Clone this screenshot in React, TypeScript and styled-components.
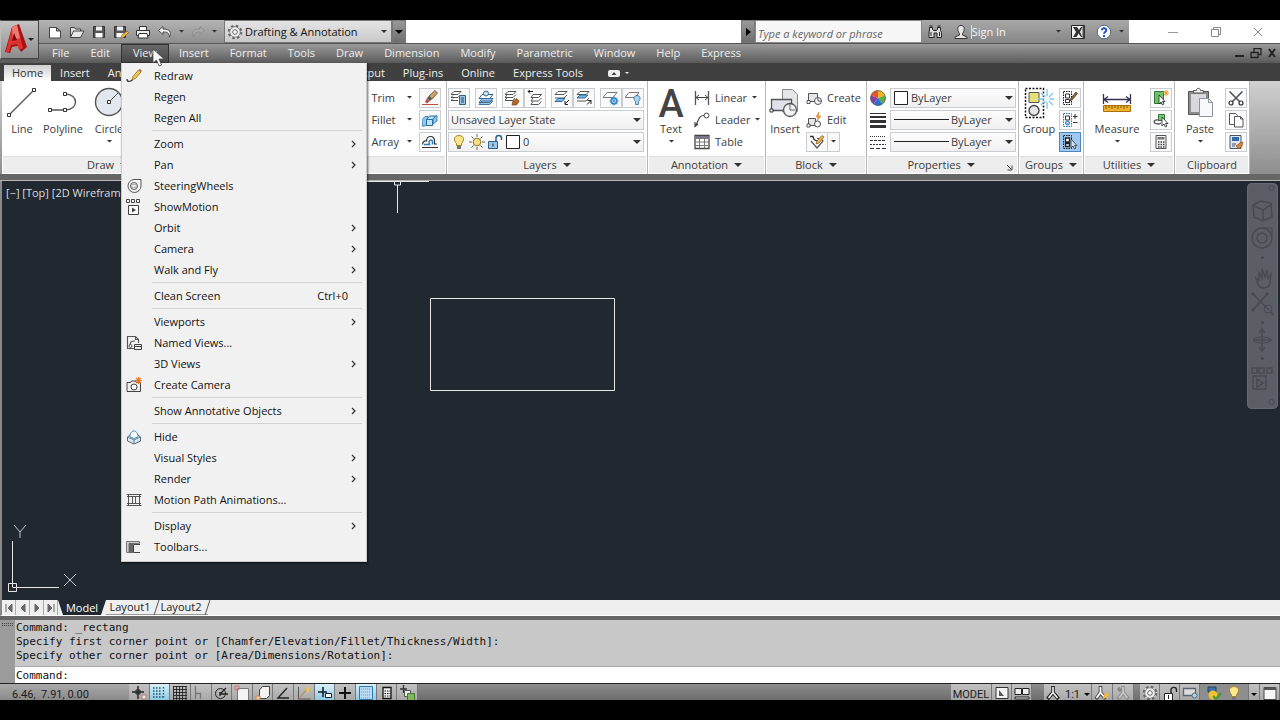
import React from 'react';
import styled, { createGlobalStyle, css } from 'styled-components';

const GlobalStyle = createGlobalStyle`
  * { box-sizing: border-box; }
  body { margin: 0; background: #000; }
  button, input, select { font: inherit; color: inherit; margin: 0; padding: 0; border: 0; background: none; border-radius: 0; }
  button { cursor: default; }
  svg { display: block; flex: none; }
`;

/* ---------- icons ---------- */

const art: Record<string, React.ReactNode> = {
  newFile: <path d="M2.5 3.5h7l4 3.5v7h-11z M9.5 3.5v3.5h4" fill="#fff" stroke="#444" />,
  open: <><path d="M1.500 13V3.500h4l1 1.500h5v2" fill="#ddd" stroke="#444" /><path d="M1.500 13.500l3-6.500h10.500l-3.500 6.500z" fill="#e8e8e8" stroke="#444" /></>,
  save: <><path d="M2.500 2.500h11v11h-11z" fill="#555" stroke="#333" /><path d="M5 2.500h6v4H5z" fill="#eee" /><path d="M4.500 9h7v4.500h-7z" fill="#fff" /></>,
  saveAs: <><path d="M1.500 2.500h11v11h-11z" fill="#555" stroke="#333" /><path d="M4 2.500h6v4H4z" fill="#eee" /><path d="M3.500 9h7v4.500h-7z" fill="#fff" /><path d="M8 14l1-3 5-4 1.500 1.500-5 5z" fill="#f2b843" stroke="#8a5a14" strokeWidth=".7" /></>,
  print: <><path d="M4.500 6V2.500h7V6" fill="#fff" stroke="#333" /><path d="M1.500 6.500h13v5h-13z" fill="#eee" stroke="#333" /><path d="M4 9.500h8l1 4.500H3z" fill="#fff" stroke="#333" /></>,
  undo: <path d="M6 2.500L1.500 6.500 6 10.500V8c4 0 6 .5 6.500 5 2.500-5 0-8-6.500-8z" fill="#eee" stroke="#444" strokeWidth=".9" />,
  redo: <path d="M10 2.500l4.500 4-4.500 4V8c-4 0-6 .5-6.500 5-2.500-5 0-8 6.500-8z" fill="#aaa" stroke="#888" strokeWidth=".9" />,
  gear: <><circle cx="8" cy="8" r="6.300" fill="#eee" stroke="#666" strokeWidth="2" strokeDasharray="2.600 2.350" /><circle cx="8" cy="8" r="5.300" fill="#eee" stroke="#666" strokeWidth=".8" /><circle cx="8" cy="8" r="2.300" fill="#fff" stroke="#666" /></>,
  binoculars: <path d="M2.500 3.500h3v2l1 1h3l1-1v-2h3v3l1 2v5h-4.500V9H7v4.500H2V8l.5-2z M4 8v4 M12.500 8v4 M2.500 2h3 M10.500 2h3" fill="#ddd" stroke="#222" />,
  user: <path d="M8 1.500c-3 0-3.600 2.500-3 5 .4 1.500 1 2.500 1.500 3v1.500L2 13v1.500h12V13l-4.500-2V9.500c.5-.5 1.100-1.500 1.500-3 .6-2.500 0-5-3-5z" fill="#e6e6e6" stroke="#333" />,
  exchange: <><path d="M1.500 1.500h13v13h-13z" fill="#f4f4f4" stroke="#222" /><path d="M3 3h4l2 3 2-3h1.500L10 8l2.500 5H11L8.500 9.500 6.500 13H3l3-5z" fill="#333" /><path d="M12.500 2h2v12h-2z" fill="#444" /></>,
  help: <><circle cx="8" cy="8" r="6.800" fill="#fff" stroke="#567" /><path d="M5.800 6.200C5.800 3.600 10.300 3.600 10.300 6.200 10.300 8 8 7.800 8 9.800" fill="none" stroke="#1c4fc0" strokeWidth="1.900" /><path d="M7 11h2v2H7z" fill="#1c4fc0" /></>,
  pencil: <><path d="M1 11c0 4 4 2 5.500 1" fill="none" stroke="#333" strokeWidth="1.300" /><path d="M6 12l1-3.500L12.500 2 15 4 9.500 10.500z" fill="#f0c64c" stroke="#8d6a1c" strokeWidth=".8" /><path d="M12.500 2L15 4l.8-1.500L14 1z" fill="#c65b4a" /></>,
  wheel: <><path d="M15 1.500H8A6.500 6.500 0 1 0 15 8z" fill="#f4f4f6" stroke="#555" /><circle cx="8" cy="8" r="3.500" fill="none" stroke="#555" /><path d="M6 6.500h4v3H6z" fill="none" stroke="#999" strokeWidth=".7" /></>,
  motion: <><path d="M.5.500h3v3h-3z M5.500.500h3v3h-3z M10.500.500h3v3h-3z M2.500 6.500h10v9h-10z" fill="#fff" stroke="#444" /><path d="M6 8.500l4 2.500-4 2.500z" fill="#444" /></>,
  views: <><path d="M9 13.500H1.500v-12h8l3 3V8 M9.500 1.500v3h3 M4 11c0-4 1-5 5-5" fill="none" stroke="#555" strokeWidth="1.100" /><path d="M8.500 9.500h7v5h-7z M8.500 11.500h7" fill="#eee" stroke="#444" /><circle cx="4.500" cy="11" r="1.500" fill="#eee" stroke="#555" /></>,
  camera: <><path d="M1 5.500h3.500l1-1.500h4l1 1.500H14.500v9H1z" fill="#eee" stroke="#444" /><circle cx="8" cy="10" r="3" fill="#fff" stroke="#444" /><path d="M12.500 0v7 M9 3.500h7 M10 1l5 5 M15 1l-5 5" stroke="#e8762c" strokeWidth="1.200" /></>,
  hide: <><path d="M1.500 8L5 5h6l3.500 3v4L8 15l-6.500-3z" fill="#dbe9f2" stroke="#567" /><path d="M1.500 8L8 11l6.500-3M8 11v4" fill="none" stroke="#567" strokeWidth=".8" /><path d="M4 8c0-8 8-8 8 0L8 9.500z" fill="#f4f9fc" stroke="#4a8ab0" /></>,
  film: <path d="M.500 2.500h15 M.500 13.500h15 M2.500 2.500v11 M6.500 4.500v7 M9.500 4.500v7 M13.500 2.500v11 M1 4.500h14 M1 11.500h14" fill="none" stroke="#444" strokeWidth=".9" />,
  toolbars: <><path d="M.500 2.500h13v2H3v9H.500z" fill="#ccc" stroke="#777" /><path d="M3 4h4v10H3z" fill="#666" /><path d="M14 5.500H7.500v8H14" fill="none" stroke="#444" /></>,
  line: <><path d="M3 28L28 3" stroke="#555" strokeWidth="1.300" /><path d="M1.500 26.500h3v3h-3z M26.500 1.500h3v3h-3z" fill="#fff" stroke="#333" /></>,
  polyline: <><path d="M3 23h15 M18 23c14 0 14-16 0-16" fill="none" stroke="#555" strokeWidth="1.400" /><path d="M1.500 21.500h3v3h-3z M16.500 21.500h3v3h-3z M16.500 5.500h3v3h-3z" fill="#fff" stroke="#333" /></>,
  circle: <><circle cx="16" cy="15" r="13.500" fill="#e3e7ee" stroke="#555" strokeWidth="1.400" /><path d="M16 15l9-9" stroke="#555" /><path d="M14.500 13.500h3v3h-3z" fill="#fff" stroke="#333" /></>,
  erase: <><path d="M0 14.500h16" stroke="#b5533c" /><path d="M3 12l2-4 3 3-3 2.500z" fill="#c0504d" /><path d="M5 8l2-2 3 3-2 2z" fill="#555" /><path d="M7 6l6-5.500L15.500 3 10 9z" fill="#c9a468" stroke="#5a4526" strokeWidth=".8" /></>,
  explode: <><path d="M0 7.500l3-3h3v7l-3 2.500H0z M11 5l4-1.500V9l-4 3z" fill="#8cc8ee" stroke="#2a6da0" strokeWidth=".8" /><path d="M4.500 7.500h6v6h-6z M4.500 7.500l3-3.500h6l-3 3.500" fill="#bfe3f7" stroke="#2a6da0" /></>,
  offset: <><path d="M0 13.500h16 M1 10.500c-1-3 2-4 3.500-3.500 0-6 8-6 8 0v3H15" fill="none" stroke="#333" strokeWidth="1.200" /><path d="M2 10.500h5.500c-2-5 3-6 3-2v2" fill="none" stroke="#2d7fc0" strokeWidth="1.500" /></>,
  layerProps: <><path d="M3 1.500h7l-3 3H0z M9 5.500l-2 2H0l2-2 M7 10.500H0l2-2" fill="#fff" stroke="#555" /><path d="M8.500 5.500h6v9h-6z" fill="#9cc6ea" stroke="#2d5f8c" /><path d="M10 8h3M10 10h3M10 12h3" stroke="#245" /></>,
  layerOn: <><path d="M4 8.500h11l-3.500 4H1z M4 11h11l-3.500 3.500H1z" fill="#9cc6ea" stroke="#33658f" strokeWidth=".9" /><path d="M4 4.500h11l-3.500 4H1z" fill="#fff" stroke="#33658f" /><circle cx="8" cy="3.500" r="2.500" fill="#cbe4f6" stroke="#33658f" /></>,
  layerMatch: <><path d="M3 1.500h8l-3 3H0z M11 4.500l-3 3H0l2-2.500 M10 8L8 10.500H0L2 8" fill="#fff" stroke="#555" /><path d="M8 11l4-2.500 2 3-2.500 3.500H7z" fill="#b5682a" stroke="#7d4417" strokeWidth=".7" /></>,
  layerPrev: <><path d="M6 4.500h8.500l-3 3H4z M14.500 8l-3 3H4l2-3 M14.500 11.500l-3 3H4l2-3" fill="#fff" stroke="#555" /><path d="M1 1.500h5 M3 0L1 1.500 3 3.500" stroke="#222" fill="none" /></>,
  layerIso: <><path d="M4 1.500h9l-3 3H1z M13 5l-3 3H1" fill="#fff" stroke="#555" /><path d="M4 8.500h7l-3 3H1z" fill="#7ab8ea" stroke="#2a6da0" /><path d="M15 10l-4 4 M11 11v3.500h3" stroke="#222" fill="none" /></>,
  layerUniso: <><path d="M4 1.500h9l-3 3H1z M13 8l-3 3H1" fill="#fff" stroke="#555" /><path d="M4 5h8l-3 3H1z" fill="#7ab8ea" stroke="#2a6da0" /><path d="M11 14.500l4-4 M11.500 10.500H15V14" stroke="#222" fill="none" /></>,
  layerFreeze: <><path d="M4 2.500h10l-4 5H0z" fill="#fff" stroke="#777" /><circle cx="11" cy="11" r="3" fill="#d6edfb" stroke="#2a84c8" strokeWidth="1.400" /><path d="M11 6v10 M6 11h10 M7.500 7.500l7 7 M14.500 7.500l-7 7" stroke="#2a84c8" strokeWidth=".6" /></>,
  layerOff: <><path d="M4 2.500h10l-4 5H0z" fill="#fff" stroke="#777" /><path d="M12 5.500c3.500 0 4 4 1.500 6v3h-3v-3c-2.500-2-2-6 1.500-6z" fill="#a9d2f1" stroke="#3d78a8" strokeWidth=".9" /></>,
  bulb: <><path d="M8 1.500c5.500 0 5.500 5.500 2.500 8v2h-5v-2c-3-2.500-3-8 2.500-8z" fill="#fbe58d" stroke="#a38325" /><path d="M6 12h4v3H6z" fill="#777" /></>,
  sun: <><circle cx="8" cy="8" r="3.800" fill="#fbdf86" stroke="#8a7432" /><path d="M8 0v3M8 13v3M0 8h3M13 8h3M2.500 2.500l2 2M11.500 11.500l2 2M13.500 2.500l-2 2M4.500 11.500l-2 2" stroke="#665" /></>,
  unlock: <><path d="M1.500 7.500h9v7h-9z" fill="#9cc6ea" stroke="#2d5f8c" /><path d="M9 7.500V4c0-3.500 5.500-3.500 5.500 0v2" fill="none" stroke="#2d5f8c" strokeWidth="1.500" /><path d="M6 9.500v3" stroke="#222" /></>,
  swatch: <path d="M1.500 1.500h13v13h-13z" fill="#fff" stroke="#222" />,
  linear: <><path d="M1.500 1v14 M14.500 1v14" stroke="#555" strokeWidth="1.300" /><path d="M2 7.500h12 M5 5L2 7.500 5 10 M11 5l3 2.500-3 2.500" fill="none" stroke="#444" /></>,
  leader: <><circle cx="12.500" cy="3.500" r="2.500" fill="#fff" stroke="#444" /><path d="M10 3.500C5 3.500 5 7 1.500 14 M1 10v4.500L4 12" fill="none" stroke="#444" strokeWidth="1.200" /></>,
  table: <><path d="M1 1.500h14v13H1z" fill="#fff" stroke="#444" strokeWidth="1.300" /><path d="M1 2h14v3H1z" fill="#778" /><path d="M1 8h14M1 11.500h14M5.500 5v9.500M10.500 5v9.500" stroke="#777" /></>,
  insertBlock: <><path d="M13.500 2.500h10l5 5v17h-15z" fill="#e4e6ea" stroke="#888" /><path d="M2.500 12.500h20v11h-20z" fill="#dfe2e8" stroke="#555" strokeWidth="1.300" /><circle cx="21" cy="23" r="6.500" fill="#f0f1f4" stroke="#555" strokeWidth="1.300" /><path d="M21 17v6h5" fill="none" stroke="#666" /><path d="M1 22h3v3H1z" fill="#fff" stroke="#333" /></>,
  create: <><path d="M2.500 3.500h9v8h-9z" fill="#e4e6ea" stroke="#555" /><circle cx="12" cy="11" r="3.500" fill="#f5f5f5" stroke="#555" /><path d="M12 7.500V11h3M1 10.500h3v3H1z" fill="#fff" stroke="#333" strokeWidth=".8" /></>,
  editBlock: <><path d="M2.500 6.500h7v7h-7z" fill="#e4e6ea" stroke="#555" /><circle cx="11.500" cy="12" r="3" fill="#f5f5f5" stroke="#555" /><path d="M1 12h3v3H1z" fill="#fff" stroke="#333" strokeWidth=".8" /><path d="M13 0l-3 5h2.500L11 9l4-5h-2.500z" fill="#f2a33a" stroke="#c06f14" strokeWidth=".5" /></>,
  attrib: <><path d="M2 7l6 7 6-7-2-2.500H8" fill="#fff" stroke="#555" strokeWidth="1.200" /><path d="M1 2.500h3l1 3 4 2" fill="none" stroke="#333" strokeWidth="1.300" /><path d="M7 10l1-3 5-5.500L15 3l-5 6z" fill="#eeb24a" stroke="#7d541a" strokeWidth=".7" /></>,
  color: <><path d="M8 8V.500A7.500 7.500 0 0 0 1 5.500z" fill="#e8552d" /><path d="M8 8V.500A7.500 7.500 0 0 1 15 5.500z" fill="#f1b424" /><path d="M8 8l7-2.500A7.500 7.500 0 0 1 12.500 14z" fill="#58b044" /><path d="M8 8l4.500 6a7.500 7.500 0 0 1-9 0z" fill="#2c6fd0" /><path d="M8 8l-4.500 6A7.500 7.500 0 0 1 1 5.500z" fill="#8b3d9c" /><circle cx="8" cy="8" r="7.500" fill="none" stroke="#555" strokeWidth=".7" /></>,
  weight: <path d="M0 1h16v1H0z M0 4h16v2H0z M0 8h16v3H0z M0 13h16v3H0z" fill="#333" />,
  linetype: <><path d="M0 2.500h16" stroke="#333" strokeDasharray="1 1" /><path d="M0 6.500h16" stroke="#333" strokeDasharray="3 1" /><path d="M0 10.500h16" stroke="#333" strokeDasharray="2 1" /><path d="M0 14.500h16" stroke="#333" strokeDasharray="4 2" /></>,
  group: <><path d="M2.500 1.500h18v29h-18z" fill="none" stroke="#111" strokeWidth="1.500" strokeDasharray="2 1.500" /><path d="M6 5.500h10v10H6z" fill="#e6df7a" stroke="#555" /><circle cx="11" cy="23.500" r="5" fill="#e4e6ea" stroke="#444" strokeWidth="1.400" /><path d="M24 2v20 M15 12h16 M18 6l12 12 M30 6L18 18" stroke="#7fc4ec" strokeWidth="1.300" /><circle cx="24" cy="12" r="3" fill="#e8f6fd" /></>,
  ungroup: <><path d="M1.500 1.500h8v13h-8z" fill="none" stroke="#111" strokeDasharray="1.500 1" /><path d="M3.500 4h4v4h-4z M3.500 9.500h4v3h-4z" fill="#fff" stroke="#333" /><path d="M8 11l1-3 5-6 1.500 1.500-5 6z" fill="#8a6a3a" stroke="#4a2a1a" strokeWidth=".7" /></>,
  groupEdit: <><path d="M1.500 1.500h8v13h-8z" fill="none" stroke="#2878b8" strokeDasharray="1.500 1" /><path d="M3.500 4h4v4h-4z" fill="#fff" stroke="#333" /><circle cx="5.500" cy="11" r="2" fill="#9cd0f0" stroke="#2878b8" /><path d="M13 2v5M11 4.500h4.500M11 10.500h4.500" stroke="#333" /></>,
  groupSel: <><path d="M1.500 1.500h8v13h-8z" fill="none" stroke="#111" strokeDasharray="1.500 1" /><path d="M3.500 4h4v4h-4z M3.500 9.500h4v3h-4z" fill="#fff" stroke="#222" strokeWidth="1.300" /><path d="M9 5v9l2-2 1.500 3 1.500-1-1.500-2.500H15z" fill="#cfe0f2" stroke="#333" strokeWidth=".8" /></>,
  measure: <><path d="M2.500 7v10 M29.500 7v10 M3 12.500h26 M7 9.500l-4 3 4 3 M25 9.500l4 3-4 3" fill="none" stroke="#335" strokeWidth="1.300" /><path d="M2.500 18.500h27v6h-27z" fill="#f0b32f" stroke="#a86f0c" /><path d="M5 19v3M8 19v2M11 19v3M14 19v2M17 19v3M20 19v2M23 19v3M26 19v2" stroke="#7d5208" /></>,
  quickSel: <><path d="M1.500 1.500h9v12h-9z" fill="#6fbf6a" stroke="#2f7a35" /><path d="M6 5v9l2-2 1.500 3 1.500-1-1.500-2.500H12z" fill="#fff" stroke="#222" strokeWidth=".8" /><path d="M13 0v6M10 3h6M11 1l4 4M15 1l-4 4" stroke="#f0962c" /></>,
  selectSim: <><path d="M5.500 2.500h6v6h-6z" fill="#7cc276" stroke="#2f7a35" /><path d="M6 8C0 7-1 12 6 12l2-1" fill="none" stroke="#555" strokeWidth="1.300" /><path d="M9 5v9l2-2 1.500 3 1.500-1-1.500-2.500H15z" fill="#fff" stroke="#222" strokeWidth=".8" /></>,
  calc: <><path d="M3 1.500h10v13H3z" fill="#f2f2f2" stroke="#555" /><path d="M4.500 3h7v2.500h-7z" fill="#777" /><path d="M5 8h6.500M5 10.500h6.500M5 13h6.500" stroke="#444" strokeWidth="1.400" strokeDasharray="1.500 1" /></>,
  paste: <><path d="M4.500 4.500h20v23h-20z" fill="#8d8d8f" stroke="#555" /><path d="M7 7h15v18H7z" fill="#d9d9db" /><path d="M9.500 6V3.500h3c0-3 4-3 4 0h3V6z" fill="#eee" stroke="#555" /><path d="M15.500 11.500h9l4 4v14h-13z M24.500 11.500v4h4" fill="#f7f9fc" stroke="#8a93a0" /></>,
  cut: <><path d="M1.500 1.500L12 12 M14.500 1.500L4 12" stroke="#555" strokeWidth="1.600" /><circle cx="3" cy="13" r="2" fill="none" stroke="#333" strokeWidth="1.200" /><circle cx="13" cy="13" r="2" fill="none" stroke="#333" strokeWidth="1.200" /></>,
  copy: <><path d="M1.500 1.500h6l2 2v9h-8z" fill="#fff" stroke="#555" /><path d="M6.500 4.500h6l2.500 2.500v8H6.500z M12.500 4.500v2.500H15" fill="#fff" stroke="#555" /></>,
  matchProp: <><path d="M2 1.500h11v13H2z" fill="#dfe8f2" stroke="#456" /><path d="M4 3h7v4H4z" fill="#2f6ba8" /><path d="M4 10h4M4 12h3" stroke="#456" /><path d="M8 12l4-3 3-1-1 4-3 3z" fill="#d9853b" stroke="#8a4c14" strokeWidth=".7" /></>,
  infer: <><path d="M1 7h12 M7 1v13" stroke="#222" strokeWidth="1.400" /><path d="M5 5h4v4H5z" fill="none" stroke="#222" /><path d="M11 10h4v4h-4z" fill="#eee" stroke="#b77" /></>,
  snap: <path d="M2 3h8 M2 6h8 M2 9h8 M2 12h10 M12.500 2v11" stroke="#1d5478" strokeWidth="1.300" strokeDasharray="1.500 1.500" />,
  grid: <path d="M1 1.500h14 M1 4.500h14 M1 7.500h14 M1 10.500h14 M1 13.500h14 M1.500 1v15 M4.500 1v15 M7.500 1v15 M10.500 1v15 M14 1v15" stroke="#222" strokeWidth=".9" />,
  ortho: <path d="M2.500 1v13 M2.500 8.500h5V14" fill="none" stroke="#777" strokeWidth="1.300" />,
  polar: <><circle cx="7.500" cy="8.500" r="5" fill="none" stroke="#222" /><path d="M7 9h8 M7 9l6-6 M7 7v4" stroke="#222" strokeWidth="1.300" /></>,
  osnap: <><path d="M3.500 3.500h11v12h-11z" fill="#f4f4f4" stroke="#777" /><path d="M1 1h4v4H1z" fill="none" stroke="#c77" /></>,
  osnap3d: <><path d="M4.500 5l3-3.500h7v9l-3 3h-7z" fill="#f4f4f4" stroke="#444" /><path d="M1 11h4v4H1z" fill="#f6c9a0" stroke="#b86" /></>,
  otrack: <path d="M12 3L3 13h11" fill="none" stroke="#222" strokeWidth="1.400" />,
  ucs: <><path d="M2.500 2v12h12" fill="none" stroke="#555" /><path d="M4 12l7-8" stroke="#b8842a" /><path d="M11 1l3 3-2 4-2-3z" fill="#f4c448" /></>,
  dyn: <><path d="M1 7h9 M6 2v10" stroke="#123" strokeWidth="1.600" /><path d="M8.500 8.500h6v4h-6z" fill="#fff" stroke="#123" /></>,
  lwt: <path d="M2 8h12 M8 2v12" stroke="#111" strokeWidth="2" />,
  tpy: <><path d="M1.500 1.500h13v13h-13z" fill="#b9dcf4" stroke="#2f78b4" /><path d="M3 4h10M3 7h10M3 10h10M3 13h10" stroke="#5a9bd0" strokeDasharray="1 1" /></>,
  qp: <><path d="M4 2.500h8v11H4z" fill="#eee" stroke="#111" strokeWidth="1.300" /><path d="M5.500 6h6M5.500 8.500h6M5.500 11h6" stroke="#111" strokeDasharray="1.500 1" /></>,
  cycling: <><path d="M1 4h7M4.500 0v8" stroke="#333" strokeWidth="1.300" /><path d="M5.500 5.500h6v6h-6z" fill="#eee" stroke="#555" /><path d="M8.500 8.500h7v7h-7z" fill="#7fb85a" stroke="#3f7d2a" /></>,
  paper: <><path d="M2 2.500h12v11H2z" fill="#f4f4f4" stroke="#333" /><path d="M5 5l5 6H5z" fill="#555" /></>,
  quickView: <path d="M1 3.500h6.500v6H1z M8.500 3.500H15v6H8.500z M1 12h14v2H1z" fill="#eee" stroke="#222" />,
  scale: <><path d="M8 1v6.500L2.500 14 M8 7.500l5.500 6.500" fill="none" stroke="#222" strokeWidth="3.600" /><path d="M8 2v5.500L3.500 13 M8 7.500l4.500 5.500" fill="none" stroke="#f4f4f4" strokeWidth="1.600" /></>,
  scaleVis: <><path d="M6.500 1v6.500L2 14 M6.500 7.500l5 6.500" fill="none" stroke="#444" strokeWidth="3.600" /><path d="M6.500 2v5.500L2.500 13 M6.500 7.500l4.500 5.500" fill="none" stroke="#fff" strokeWidth="1.800" /><path d="M12 6l1 3 3 .5-2.500 2 .5 3-2.500-2-2.500 2 .5-3z" fill="#f2b83c" /></>,
  scaleAuto: <><path d="M8 1v6.500L3 14 M8 7.500l5.500 6.500 M3 3l3 3" fill="none" stroke="#8a8a8a" strokeWidth="3.400" /><path d="M8 2v5.500L4 13 M8 7.500l4.500 5.500" fill="none" stroke="#ccc" strokeWidth="1.600" /></>,
  lockUi: <><path d="M2.500 8.500h8v7h-8z" fill="#fff" stroke="#222" /><path d="M9 8V5c0-3.500 5.500-3.500 5.500 0v2" fill="none" stroke="#222" strokeWidth="1.400" /><path d="M6.500 10v4" stroke="#222" /></>,
  hardware: <><path d="M1.500 3.500h12v7h-12z" fill="#ddd" stroke="#567" strokeWidth="1.300" /><circle cx="12.500" cy="10.500" r="2.500" fill="#a8d4f2" stroke="#567" /></>,
  graphics: <><path d="M2 2h8v5H2z" fill="#3c6fb0" stroke="#245" /><circle cx="7" cy="10" r="4.500" fill="#f1c232" /><path d="M7 11l3 3 5-6" fill="none" stroke="#3f9b35" strokeWidth="2" /></>,
  clean: <><path d="M2 2.500h12v12H2z" fill="#f6f6f6" stroke="#444" /><path d="M2 2.500h12V5H2z" fill="#555" /></>,
};

const Icon = ({ n, s = 16, box }: { n: string; s?: number; box?: number }) => (
  <svg width={s} height={s} viewBox={`0 0 ${box || 16} ${box || 16}`} fill="none" aria-hidden="true">{art[n]}</svg>
);

const Caret = ({ w = 8, c = '#333' }: { w?: number; c?: string }) => (
  <svg width={w} height={w / 2} viewBox="0 0 8 4" aria-hidden="true"><path d="M0 0h8L4 4z" fill={c} /></svg>
);

/* ---------- shell ---------- */

const Screen = styled.main`
  display: flex;
  flex-direction: column;
  min-height: 100vh;
  padding: 20px 0;
  background: #000;
  color: #3c3c3c;
  font: 11px/14px 'Open Sans', 'Noto Sans', sans-serif;
`;

const Header = styled.header`
  display: flex;
  background: #5c5c5c;
`;

const LogoButton = styled.button`
  display: flex;
  align-items: center;
  justify-content: space-between;
  width: 39px;
  height: 39px;
  padding: 0 4px 0 3px;
  border: 1px solid #444;
  border-left-color: #bbb;
  background: linear-gradient(#c4c4c4, #8c8c8c);
`;

const HeaderRows = styled.div`
  flex: 1;
  min-width: 0;
`;

const TitleBar = styled.div`
  display: flex;
  height: 23px;
  background: #fff;
`;

const QuickAccess = styled.div`
  display: flex;
  align-items: center;
  gap: 6px;
  padding: 0 7px 0 8px;
  background: linear-gradient(#b4b4b4, #8e8e8e);
`;

const IconButton = styled.button`
  display: flex;
  align-items: center;
`;

const Workspace = styled.label`
  display: flex;
  align-items: center;
  width: 168px;
  padding: 0 4px 0 2px;
  gap: 2px;
  border: 1px solid #777;
  background: linear-gradient(#e4e4e4, #c9c9c9);
  color: #111;
`;

const SelectBox = styled.select<{ $w?: number }>`
  appearance: none;
  height: 18px;
  outline: none;
  ${p => (p.$w ? css`flex: none; width: ${p.$w}px;` : css`flex: 1; min-width: 0;`)}
`;

const EdgeButton = styled.button`
  display: flex;
  align-items: center;
  justify-content: center;
  width: 14px;
  background: linear-gradient(#999, #6f6f6f);
  border: 1px solid #777;
`;

const TitleSpace = styled.div`
  flex: 1;
`;

const SearchInput = styled.input`
  width: 167px;
  padding: 4px 2px 0;
  border: 1px solid #888;
  background: #f7f7f7;
  font-style: italic;
  &::placeholder { color: #666; opacity: 1; }
`;

const InfoBar = styled.div`
  display: flex;
  align-items: center;
  justify-content: space-between;
  width: 207px;
  padding: 0 5px;
  background: linear-gradient(#a8a8a8, #868686);
  color: #f4f4f4;
`;

const SignIn = styled.button`
  display: flex;
  align-items: center;
  gap: 2px;
  width: 108px;
  span { flex: 1; text-align: left; border-left: 1px solid #ddd; }
`;

const HelpGroup = styled.div`
  display: flex;
  align-items: center;
  gap: 7px;
`;

const WindowControls = styled.div`
  display: flex;
  align-items: center;
  justify-content: space-between;
  width: 151px;
  padding: 0 17px 0 39px;
`;

const MenuBar = styled.nav`
  display: flex;
  height: 20px;
  padding: 0 2px 0 3px;
  border-top: 1px solid #555;
  background: linear-gradient(#9a9a9a, #5a5a5a);
  color: #eee;
`;

const MenuSlot = styled.div`
  position: relative;
`;

const MenuTitle = styled.button<{ $open?: boolean }>`
  height: 19px;
  padding: 0 11px 2px 10px;
  ${p => p.$open && css`background: linear-gradient(#6a6a6a, #454545); outline: 1px solid #333; outline-offset: -1px; padding: 0 12px 2px;`}
`;

const DocControls = styled.div`
  display: flex;
  align-items: center;
  gap: 4px;
  margin-left: auto;
`;

/* ---------- drop-down menu ---------- */

const Menu = styled.div`
  position: absolute;
  z-index: 5;
  top: 100%;
  left: 0;
  width: 246px;
  padding: 2px 2px 4px;
  border: 1px solid #ccc;
  border-top: 0;
  background: #f1f1f1;
  color: #111;
  box-shadow: 1px 1px 2px rgba(0, 0, 0, 0.6);
`;

const MenuItem = styled.button`
  display: grid;
  grid-template-columns: 28px 1fr auto;
  align-items: center;
  width: 100%;
  height: 21px;
  padding: 0 8px 0 2px;
  text-align: left;
`;

const MenuIcon = styled.span`
  display: flex;
`;

const Shortcut = styled.span`
  padding-right: 8px;
`;

const MenuRule = styled.hr`
  height: 1px;
  margin: 2px 2px 2px 28px;
  border: 0;
  background: #d2d2d2;
`;

const Pointer = styled.svg`
  position: absolute;
  z-index: 6;
  top: 4px;
  left: 31px;
`;

/* ---------- ribbon ---------- */

const TabStrip = styled.div`
  display: flex;
  align-items: flex-end;
  height: 18px;
  padding-left: 4px;
  background: #404040;
  color: #eee;
`;

const Tab = styled.button<{ $active?: boolean }>`
  height: 16px;
  padding: 0 9px;
  ${p => p.$active && css`padding: 0 8px; background: linear-gradient(#cfcfcf, #fff); color: #333;`}
`;

const TabToggle = styled.button`
  display: flex;
  align-items: center;
  gap: 5px;
  height: 16px;
  margin-left: 16px;
`;

const Ribbon = styled.section`
  display: flex;
  height: 93px;
  padding-left: 2px;
  background: linear-gradient(#d0d0d0, #8e8e8e);
`;

const PanelBox = styled.section<{ $w: number }>`
  display: flex;
  flex-direction: column;
  flex: none;
  width: ${p => p.$w}px;
  border-right: 1px solid #b9b9b9;
  background: #fff;
`;

const PanelBody = styled.div<{ $align?: 'start' | 'end' }>`
  display: flex;
  flex: 1;
  gap: 3px;
  justify-content: space-between;
  padding: 6px 2px 0 3px;
  ${p => p.$align === 'start' && css`padding: 6px 3px 0 1px;`}
  ${p => p.$align === 'end' && css`justify-content: flex-end; padding: 6px 5px 0 0;`}
`;

const PanelTitle = styled.button`
  display: flex;
  align-items: center;
  justify-content: center;
  gap: 6px;
  height: 17px;
  margin: 0 1px 1px;
  border-top: 1px solid #dcdcdc;
  background: #ededed;
`;

const Launcher = styled.span`
  display: flex;
  margin: 4px 4px 0 -14px;
`;

const CenteredTitle = styled.span`
  display: flex;
  flex: 1;
  align-items: center;
  justify-content: center;
  gap: 6px;
`;

const BigButton = styled.button<{ $w: number }>`
  display: flex;
  flex-direction: column;
  align-items: center;
  align-self: flex-start;
  width: ${p => p.$w}px;
  span { margin: 3px 0 4px; }
`;

const LetterA = styled.b`
  height: 32px;
  font: 500 38px/34px Roboto, 'Liberation Sans', sans-serif;
  color: #444;
`;

const Stack = styled.div<{ $grow?: boolean }>`
  display: flex;
  flex-direction: column;
  gap: 1px;
  ${p => p.$grow && css`flex: 1; min-width: 0;`}
`;

const ToolRow = styled.div<{ $gap?: number }>`
  display: flex;
  align-items: center;
  height: 21px;
  gap: ${p => p.$gap || 0}px;
`;

const TextTool = styled.button`
  display: flex;
  align-items: center;
  gap: 5px;
`;

const CaretGap = styled.button`
  display: flex;
  align-items: center;
  justify-content: center;
  width: 14px;
  height: 20px;
`;

const SquareButton = styled.button<{ $on?: boolean; $narrow?: boolean }>`
  display: flex;
  align-items: center;
  justify-content: center;
  width: ${p => (p.$narrow ? 12 : 22)}px;
  height: 20px;
  border: 1px solid ${p => (p.$on ? '#4d86c0' : '#c9ccd0')};
  background: ${p => (p.$on ? '#9fc8f0' : '#fafafa')};
  ${p => p.$narrow && css`border-left: 0;`}
`;

const ButtonPair = styled.div`
  display: flex;
`;

const ComboBox = styled.label`
  display: flex;
  flex: 1;
  align-items: center;
  min-width: 0;
  height: 20px;
  padding: 0 2px;
  gap: 2px;
  border: 1px solid #c9ccd0;
  background: linear-gradient(#fdfdfd, #f0f0f0);
`;

const Stroke = styled.span`
  flex: 1;
  height: 1px;
  margin-left: 1px;
  background: #222;
`;

const RibbonEdge = styled.div`
  height: 7px;
  border-bottom: 1px solid #b4b4b4;
  background: #666;
`;

/* ---------- drawing area ---------- */

const Canvas = styled.section`
  position: relative;
  flex: 1;
  min-height: 400px;
  overflow: hidden;
  border-left: 2px solid #8a8a8a;
  background: #212830;
  color: #dcdcdc;
`;

const ViewLabel = styled.div`
  padding: 5px 4px;
`;

const Drawing = styled.svg`
  position: absolute;
  top: 0;
  left: 0;
`;

const UcsIcon = styled.svg`
  position: absolute;
  left: 4px;
  bottom: 0;
`;

const NavBar = styled.div`
  position: absolute;
  top: 2px;
  right: 2px;
`;

/* ---------- layout tabs ---------- */

const LayoutTabs = styled.div`
  display: flex;
  height: 16px;
  border-left: 2px solid #8a8a8a;
  border-bottom: 1px solid #fff;
  background: #efefef;
  color: #222;
`;

const StepButton = styled.button`
  display: flex;
  align-items: center;
  justify-content: center;
  width: 14px;
  border-right: 1px solid #aaa;
`;

const ModelTab = styled.button`
  width: 48px;
  background: #212830;
  color: #fff;
  clip-path: polygon(0 0, 100% 0, 43px 100%, 5px 100%);
`;

const LayoutTab = styled.button`
  position: relative;
  width: 51px;
  padding-right: 3px;
  border-bottom: 1px solid #999;
  &::after {
    content: '';
    position: absolute;
    top: 0;
    right: 0;
    width: 1px;
    height: 15px;
    background: #555;
    transform: skewX(-18deg);
  }
`;

/* ---------- command window and status bar ---------- */

const CommandWindow = styled.section`
  display: flex;
  height: 67px;
  border-top: 4px solid #666;
  background: #c8c8c8;
  color: #111;
  font-family: 'DejaVu Sans Mono', 'Liberation Mono', monospace;
`;

const Grip = styled.div`
  width: 15px;
  padding: 3px 2px;
  background: #9b9b9b;
`;

const CommandLines = styled.div`
  flex: 1;
  min-width: 0;
`;

const History = styled.pre`
  height: 47px;
  margin: 0;
  padding: 1px 1px 0;
  border-bottom: 1px solid #aaa;
  font: inherit;
`;

const Prompt = styled.label`
  display: flex;
  height: 16px;
  padding: 2px 1px 0;
  background: #fff;
  input { flex: 1; outline: none; }
`;

const StatusBar = styled.footer`
  display: flex;
  height: 17px;
  overflow: hidden;
  border-top: 1px solid #222;
  background: linear-gradient(#8c8c8c, #6d6d6d);
  color: #1c1c1c;
  font: 11px/19px Roboto, 'Liberation Sans', sans-serif;
`;

const Coordinates = styled.div`
  width: 129px;
  padding: 1px 12px 0;
  background: linear-gradient(#a9a9a9, #8a8a8a);
  white-space: pre;
`;

const ToggleGroup = styled.div`
  display: flex;
  width: 289px;
  & > button { flex: 1; }
`;

const TrayGroup = styled.div`
  display: flex;
  margin-left: auto;
`;

const StatusButton = styled.button<{ $on?: boolean; $w?: number; $inset?: boolean }>`
  display: flex;
  align-items: flex-start;
  justify-content: center;
  gap: 4px;
  width: ${p => p.$w || 20}px;
  height: 20px;
  padding-top: 1px;
  border-right: 1px solid #777;
  background: ${p => (p.$on ? 'linear-gradient(#d8f0f8, #7fc0dc)' : p.$inset ? '#8e8e8e' : 'linear-gradient(#c2c2c2, #a2a2a2)')};
`;

const LowCaret = styled.span`
  display: flex;
  padding-top: 8px;
`;

const StatusGap = styled.div<{ $w: number }>`
  width: ${p => p.$w}px;
`;

/* ---------- composed parts ---------- */

const Panel = ({ w, title, caret = true, launcher, align, children }: {
  w: number; title: string; caret?: boolean; launcher?: boolean; align?: 'start' | 'end'; children?: React.ReactNode;
}) => (
  <PanelBox $w={w} aria-label={title}>
    <PanelBody $align={align}>{children}</PanelBody>
    <PanelTitle>
      <CenteredTitle>{title}{caret && <Caret w={8} />}</CenteredTitle>
      {launcher && (
        <Launcher><svg width="7" height="7" viewBox="0 0 7 7"><path d="M1 1l4 4M6 1.500V6H1.500" fill="none" stroke="#444" /></svg></Launcher>
      )}
    </PanelTitle>
  </PanelBox>
);

const Big = ({ w, icon, label, caret }: { w: number; icon?: string; label: string; caret?: boolean }) => (
  <BigButton $w={w}>
    {icon ? <Icon n={icon} s={32} box={32} /> : <LetterA>A</LetterA>}
    <span>{label}</span>
    {caret && <Caret w={5} />}
  </BigButton>
);

const Sq = ({ n, label, on }: { n: string; label: string; on?: boolean }) => (
  <SquareButton $on={on} aria-label={label}><Icon n={n} /></SquareButton>
);

const Combo = ({ label, value, lead, w }: { label: string; value: string; lead?: React.ReactNode; w?: number }) => (
  <ComboBox>
    {lead}
    <SelectBox aria-label={label} $w={w}><option>{value}</option></SelectBox>
    <Caret w={8} />
  </ComboBox>
);

type Entry = { t: string; icon?: string; sub?: boolean; key?: string } | null;

const viewMenu: Entry[] = [
  { t: 'Redraw', icon: 'pencil' }, { t: 'Regen' }, { t: 'Regen All' }, null,
  { t: 'Zoom', sub: true }, { t: 'Pan', sub: true }, { t: 'SteeringWheels', icon: 'wheel' },
  { t: 'ShowMotion', icon: 'motion' }, { t: 'Orbit', sub: true }, { t: 'Camera', sub: true },
  { t: 'Walk and Fly', sub: true }, null,
  { t: 'Clean Screen', key: 'Ctrl+0' }, null,
  { t: 'Viewports', sub: true }, { t: 'Named Views...', icon: 'views' }, { t: '3D Views', sub: true },
  { t: 'Create Camera', icon: 'camera' }, null,
  { t: 'Show Annotative Objects', sub: true }, null,
  { t: 'Hide', icon: 'hide' }, { t: 'Visual Styles', sub: true }, { t: 'Render', sub: true },
  { t: 'Motion Path Animations...', icon: 'film' }, null,
  { t: 'Display', sub: true }, { t: 'Toolbars...', icon: 'toolbars' },
];

const ViewMenu = () => (
  <Menu role="menu" aria-label="View">
    {viewMenu.map((e, i) => e ? (
      <MenuItem key={i} role="menuitem">
        <MenuIcon>{e.icon && <Icon n={e.icon} />}</MenuIcon>
        <span>{e.t}</span>
        {e.key && <Shortcut>{e.key}</Shortcut>}
        {e.sub && <svg width="5" height="8" viewBox="0 0 5 8"><path d="M1 1l3 3-3 3" fill="none" stroke="#333" strokeWidth="1.200" /></svg>}
      </MenuItem>
    ) : <MenuRule key={i} />)}
  </Menu>
);

const menus = ['File', 'Edit', 'View', 'Insert', 'Format', 'Tools', 'Draw', 'Dimension', 'Modify', 'Parametric', 'Window', 'Help', 'Express'];
const tabs = ['Home', 'Insert', 'Annotate', 'Parametric', 'View', 'Manage', 'Output', 'Plug-ins', 'Online', 'Express Tools'];

const toggles: [string, string, boolean?][] = [
  ['infer', 'Infer constraints'], ['snap', 'Snap mode', true], ['grid', 'Grid display'], ['ortho', 'Ortho mode'],
  ['polar', 'Polar tracking'], ['osnap', 'Object snap'], ['osnap3d', '3D object snap'], ['otrack', 'Object snap tracking'],
  ['ucs', 'Dynamic UCS'], ['dyn', 'Dynamic input', true], ['lwt', 'Lineweight'], ['tpy', 'Transparency', true],
  ['qp', 'Quick properties'], ['cycling', 'Selection cycling'],
];

const steps: [string, string][] = [
  ['First', 'M2 1v8M8 1L4 5l4 4z'], ['Previous', 'M7 1L3 5l4 4z'], ['Next', 'M3 1l4 4-4 4z'], ['Last', 'M8 1v8M2 1l4 4-4 4z'],
];

export default function App() {
  return (
    <Screen>
      <GlobalStyle />
      <Header>
        <LogoButton aria-label="Application menu">
          <svg width="24" height="34" viewBox="0 0 24 34">
            <path d="M1 29L8 4l7-3 8 23-6 5-3-6-6 1-2 6z" fill="#a81116" />
            <path d="M8 4l5-2 6 23-4 2-2-6-6 1-2 7-3 0z" fill="#de3430" />
            <path d="M8 4l5-2 3 13-7 2z" fill="#ef7a72" />
            <path d="M8 18l2-8 3 7z" fill="#7d0c10" />
          </svg>
          <Caret w={6} c="#222" />
        </LogoButton>
        <HeaderRows>
          <TitleBar>
            <QuickAccess>
              {['newFile', 'open', 'save', 'saveAs', 'print', 'undo'].map(n => (
                <IconButton key={n} aria-label={n}><Icon n={n} /></IconButton>
              ))}
              <Caret w={5} />
              <IconButton aria-label="redo"><Icon n="redo" /></IconButton>
              <Caret w={5} />
            </QuickAccess>
            <Workspace>
              <Icon n="gear" />
              <SelectBox aria-label="Workspace"><option>Drafting &amp; Annotation</option></SelectBox>
              <Caret w={6} />
            </Workspace>
            <EdgeButton aria-label="Customize toolbar"><Caret w={8} c="#000" /></EdgeButton>
            <TitleSpace />
            <EdgeButton aria-label="Collapse search">
              <svg width="5" height="8" viewBox="0 0 5 8"><path d="M0 0l5 4-5 4z" fill="#000" /></svg>
            </EdgeButton>
            <SearchInput aria-label="Search" placeholder="Type a keyword or phrase" />
            <InfoBar>
              <IconButton aria-label="Search"><Icon n="binoculars" /></IconButton>
              <SignIn><Icon n="user" /><span>Sign In</span><Caret w={5} /></SignIn>
              <IconButton aria-label="Exchange"><Icon n="exchange" /></IconButton>
              <HelpGroup>
                <IconButton aria-label="Help"><Icon n="help" /></IconButton>
                <Caret w={5} />
              </HelpGroup>
            </InfoBar>
            <WindowControls>
              <IconButton aria-label="Minimize"><svg width="10" height="10"><path d="M0 5.500h10" stroke="#999" /></svg></IconButton>
              <IconButton aria-label="Restore"><svg width="10" height="10"><path d="M.5 2.500h7v7h-7z M2.500 2.500v-2h7v7h-2" fill="none" stroke="#888" /></svg></IconButton>
              <IconButton aria-label="Close"><svg width="10" height="10"><path d="M1 1l8 8M9 1L1 9" stroke="#888" /></svg></IconButton>
            </WindowControls>
          </TitleBar>
          <MenuBar>
            {menus.map(m => (
              <MenuSlot key={m}>
                <MenuTitle $open={m === 'View'} aria-expanded={m === 'View'}>{m}</MenuTitle>
                {m === 'View' && <ViewMenu />}
                {m === 'View' && (
                  <Pointer width="13" height="19" viewBox="0 0 13 19"><path d="M1 1v14l3.500-3 2.500 6 2.500-1-2.500-6h5z" fill="#fff" stroke="#444" strokeWidth=".8" /></Pointer>
                )}
              </MenuSlot>
            ))}
            <DocControls>
              <IconButton aria-label="Minimize drawing"><svg width="12" height="12"><path d="M1 8h9" stroke="#222" strokeWidth="2" /></svg></IconButton>
              <IconButton aria-label="Restore drawing"><svg width="12" height="12"><path d="M1 4.500h7v5H1z M4 4V.500h7v6H8" fill="none" stroke="#222" strokeWidth="1.300" /></svg></IconButton>
              <IconButton aria-label="Close drawing"><svg width="12" height="12"><path d="M3 1l6 8M9 1L3 9" stroke="#222" strokeWidth="2" /></svg></IconButton>
            </DocControls>
          </MenuBar>
        </HeaderRows>
      </Header>

      <TabStrip>
        {tabs.map(t => <Tab key={t} $active={t === 'Home'}>{t}</Tab>)}
        <TabToggle aria-label="Minimize ribbon">
          <svg width="12" height="7" viewBox="0 0 12 7"><rect width="12" height="7" rx="2" fill="#eee" /><path d="M3.500 5L6 2l2.500 3z" fill="#444" /></svg>
          <Caret w={4} c="#eee" />
        </TabToggle>
      </TabStrip>

      <Ribbon>
        <Panel w={212} title="Draw" align="start">
          <ButtonPair>
            <Big w={38} icon="line" label="Line" />
            <Big w={44} icon="polyline" label="Polyline" />
            <Big w={48} icon="circle" label="Circle" caret />
          </ButtonPair>
        </Panel>
        <Panel w={233} title="Modify" align="end">
          <Stack>
            {['Trim', 'Fillet', 'Array'].map(t => (
              <ToolRow key={t}><TextTool>{t}</TextTool></ToolRow>
            ))}
          </Stack>
          <Stack>
            {['Trim', 'Fillet', 'Array'].map(t => (
              <ToolRow key={t}><CaretGap aria-label={`${t} options`}><Caret w={5} /></CaretGap></ToolRow>
            ))}
          </Stack>
          <Stack>
            <ToolRow><Sq n="erase" label="Erase" /></ToolRow>
            <ToolRow><Sq n="explode" label="Explode" /></ToolRow>
            <ToolRow><Sq n="offset" label="Offset" /></ToolRow>
          </Stack>
        </Panel>
        <Panel w={201} title="Layers" align="start">
          <Stack $grow>
            <ToolRow $gap={5}>
              <Sq n="layerProps" label="Layer properties" />
              <Sq n="layerOn" label="Make current" />
              <ButtonPair><Sq n="layerMatch" label="Match layer" /><Sq n="layerPrev" label="Previous layer" /></ButtonPair>
              <ButtonPair><Sq n="layerIso" label="Isolate" /><Sq n="layerUniso" label="Unisolate" /></ButtonPair>
              <ButtonPair><Sq n="layerFreeze" label="Freeze" /><Sq n="layerOff" label="Turn off" /></ButtonPair>
            </ToolRow>
            <ToolRow><Combo label="Layer state" value="Unsaved Layer State" /></ToolRow>
            <ToolRow>
              <Combo label="Layer" value="0" lead={<><Icon n="bulb" /><Icon n="sun" /><Icon n="unlock" /><Icon n="swatch" /></>} />
            </ToolRow>
          </Stack>
        </Panel>
        <Panel w={118} title="Annotation">
          <Big w={40} label="Text" caret />
          <Stack $grow>
            <ToolRow $gap={5}><TextTool><Icon n="linear" />Linear</TextTool><Caret w={5} /></ToolRow>
            <ToolRow $gap={5}><TextTool><Icon n="leader" />Leader</TextTool><Caret w={5} /></ToolRow>
            <ToolRow><TextTool><Icon n="table" />Table</TextTool></ToolRow>
          </Stack>
        </Panel>
        <Panel w={101} title="Block" align="start">
          <Big w={36} icon="insertBlock" label="Insert" />
          <Stack $grow>
            <ToolRow><TextTool><Icon n="create" />Create</TextTool></ToolRow>
            <ToolRow><TextTool><Icon n="editBlock" />Edit</TextTool></ToolRow>
            <ToolRow><Sq n="attrib" label="Edit attributes" /><SquareButton $narrow aria-label="Attribute options"><Caret w={5} /></SquareButton></ToolRow>
          </Stack>
        </Panel>
        <Panel w={152} title="Properties" launcher>
          <Stack $grow>
            <ToolRow $gap={4}><Icon n="color" /><Combo label="Color" value="ByLayer" lead={<Icon n="swatch" />} /></ToolRow>
            <ToolRow $gap={4}><Icon n="weight" /><Combo label="Lineweight" value="ByLayer" w={52} lead={<Stroke />} /></ToolRow>
            <ToolRow $gap={4}><Icon n="linetype" /><Combo label="Linetype" value="ByLayer" w={52} lead={<Stroke />} /></ToolRow>
          </Stack>
        </Panel>
        <Panel w={65} title="Groups">
          <Big w={35} icon="group" label="Group" />
          <Stack>
            <ToolRow><Sq n="ungroup" label="Ungroup" /></ToolRow>
            <ToolRow><Sq n="groupEdit" label="Group edit" /></ToolRow>
            <ToolRow><Sq n="groupSel" label="Group selection" on /></ToolRow>
          </Stack>
        </Panel>
        <Panel w={91} title="Utilities">
          <Big w={61} icon="measure" label="Measure" caret />
          <Stack>
            <ToolRow><Sq n="quickSel" label="Quick select" /></ToolRow>
            <ToolRow><Sq n="selectSim" label="Select similar" /></ToolRow>
            <ToolRow><Sq n="calc" label="Calculator" /></ToolRow>
          </Stack>
        </Panel>
        <Panel w={75} title="Clipboard" caret={false}>
          <Big w={45} icon="paste" label="Paste" caret />
          <Stack>
            <ToolRow><Sq n="cut" label="Cut" /></ToolRow>
            <ToolRow><Sq n="copy" label="Copy" /></ToolRow>
            <ToolRow><Sq n="matchProp" label="Match properties" /></ToolRow>
          </Stack>
        </Panel>
      </Ribbon>
      <RibbonEdge />

      <Canvas aria-label="Drawing">
        <ViewLabel>[−] [Top] [2D Wireframe]</ViewLabel>
        <Drawing width="700" height="300">
          <path d="M428.500 117.500h184v92h-184z" fill="none" stroke="#e6e6e6" />
          <path d="M365 .500h62 M395.500 4v28 M392.500 0h6v4h-6z" fill="none" stroke="#e6e6e6" />
        </Drawing>
        <UcsIcon width="74" height="76">
          <path d="M6.500 17v46 M11 63.500h42 M2.500 59.500h8v8h-8z M6.500 63.500h4" fill="none" stroke="#e6e6e6" />
          <path d="M8 1l6 7 6-7 M14 8v6 M58 50l12 12 M70 50L58 62" fill="none" stroke="#c8c8c8" />
        </UcsIcon>
        <NavBar>
          <svg width="31" height="226" viewBox="0 0 31 226" fill="none" stroke="#474b51">
            <rect x=".5" y=".5" width="30" height="225" rx="4" fill="#5b5e64" stroke="#666a70" />
            <circle cx="24.500" cy="5" r="2.500" />
            <circle cx="24.500" cy="219" r="2.500" />
            <path strokeWidth="1.500" d="M6 22l8-4 10 2 1 14-9 4-9-4z M7 23l9 4 9-6 M16 27v10" />
            <circle cx="15" cy="55" r="10" strokeWidth="1.500" />
            <circle cx="15" cy="55" r="5" strokeWidth="1.500" />
            <path d="M15 45h10v10" />
            <path strokeWidth="1.500" d="M11 101l-2-6 3 2v-7l3 5v-9l3 8 2-7 1 8 3-4-1 9c-1 6-10 7-12 1z" />
            <path strokeWidth="1.500" d="M6 111l16 16 M20 111L6 127" />
            <path fill="#474b51" d="M5 110h2v2H5z M19 110h2v2h-2z M5 126h2v2H5z" />
            <circle cx="21" cy="126" r="4" />
            <path strokeWidth="1.500" d="M23 129l4 3 M15 147v20 M6 157h19 M12 150l3-4 3 4 M12 164l3 4 3-4" />
            <ellipse cx="15" cy="157" rx="9" ry="3" />
            <path strokeWidth="1.500" d="M5 185h5v5H5z M12 185h5v5h-5z M20 185h5v5h-5z M6 193h13v13H6z M10 196l6 4-6 4z" />
            <path d="M14 74h3l-1.500 2z M14 139h3l-1.500 2z M14 175h3l-1.500 2z" fill="#33373d" />
          </svg>
        </NavBar>
      </Canvas>

      <LayoutTabs>
        {steps.map(([label, d]) => (
          <StepButton key={label} aria-label={`${label} layout`}>
            <svg width="10" height="10" viewBox="0 0 10 10"><path d={d} fill="#666" stroke="#666" /></svg>
          </StepButton>
        ))}
        <ModelTab>Model</ModelTab>
        <LayoutTab>Layout1</LayoutTab>
        <LayoutTab>Layout2</LayoutTab>
      </LayoutTabs>

      <CommandWindow>
        <Grip><svg width="12" height="4"><path d="M0 .5h12M0 2.500h12" stroke="#444" strokeDasharray="1 1" /></svg></Grip>
        <CommandLines>
          <History>{'Command: _rectang\nSpecify first corner point or [Chamfer/Elevation/Fillet/Thickness/Width]:\nSpecify other corner point or [Area/Dimensions/Rotation]:'}</History>
          <Prompt>Command:<input aria-label="Command" /></Prompt>
        </CommandLines>
      </CommandWindow>

      <StatusBar>
        <Coordinates>{'6.46,  7.91, 0.00'}</Coordinates>
        <ToggleGroup>
          {toggles.map(([n, label, on]) => (
            <StatusButton key={n} $on={on} aria-label={label}><Icon n={n} /></StatusButton>
          ))}
        </ToggleGroup>
        <TrayGroup>
          <StatusButton $w={41}>MODEL</StatusButton>
          <StatusButton aria-label="Paper space"><Icon n="paper" /></StatusButton>
          <StatusButton aria-label="Quick view"><Icon n="quickView" /></StatusButton>
          <StatusGap $w={12} />
          <StatusButton $w={48}><Icon n="scale" />1:1<LowCaret><Caret w={6} c="#000" /></LowCaret></StatusButton>
          <StatusButton $w={21} aria-label="Annotation visibility"><Icon n="scaleVis" /></StatusButton>
          <StatusButton $w={21} aria-label="Automatic scales"><Icon n="scaleAuto" /></StatusButton>
          <StatusGap $w={6} />
          <StatusButton aria-label="Workspace switching"><Icon n="gear" /></StatusButton>
          <StatusButton aria-label="Lock toolbars"><Icon n="lockUi" /></StatusButton>
          <StatusButton aria-label="Hardware acceleration"><Icon n="hardware" /></StatusButton>
          <StatusButton $w={49} $inset aria-label="Tray"><Icon n="graphics" /><Icon n="bulb" /></StatusButton>
          <StatusButton $w={11} aria-label="Status menu"><LowCaret><Caret w={6} c="#000" /></LowCaret></StatusButton>
          <StatusButton aria-label="Clean screen"><Icon n="clean" /></StatusButton>
        </TrayGroup>
      </StatusBar>
    </Screen>
  );
}
